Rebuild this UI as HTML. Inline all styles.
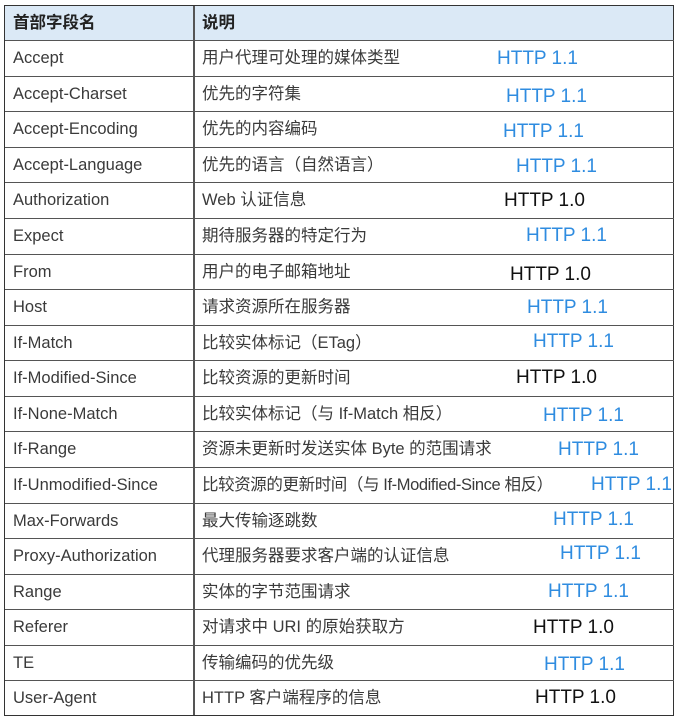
<!DOCTYPE html>
<html><head><meta charset="utf-8"><style>
body{margin:0;width:682px;height:722px;background:#fff;position:relative;overflow:hidden;font-family:"Liberation Sans","Noto Sans CJK SC",sans-serif;}
.t{position:absolute;left:4px;top:5px;width:668px;height:709px;border:1.5px solid #333;}
.hd{position:absolute;left:0;top:0;width:668px;height:35px;background:#dbe9f6;}
.v{position:absolute;left:188px;top:0;width:1.5px;height:709px;background:#555;}
.h{position:absolute;left:5px;width:669px;height:1px;background:#555;}
.r{position:absolute;left:0;width:682px;height:36px;}
.c{position:absolute;top:8px;font-size:16.5px;color:#3a3a3a;line-height:20px;white-space:nowrap;}
.n{left:13px}.d{left:202px}
.b{font-weight:bold;color:#222;top:9px;}
.p{position:absolute;font-size:19px;line-height:22px;white-space:nowrap;color:#2f8ce0;}
.k{color:#111}
</style></head><body>
<div class="t"><div class="hd"></div><div class="v"></div></div>
<div class="r" style="top:4px"><div class="c n b">首部字段名</div><div class="c d b">说明</div></div>

<div class="h" style="top:40px"></div>
<div class="r" style="top:40px"><div class="c n">Accept</div><div class="c d">用户代理可处理的媒体类型</div></div>
<div class="h" style="top:75.6px"></div>
<div class="r" style="top:75.6px"><div class="c n">Accept-Charset</div><div class="c d">优先的字符集</div></div>
<div class="h" style="top:111.2px"></div>
<div class="r" style="top:111.2px"><div class="c n">Accept-Encoding</div><div class="c d">优先的内容编码</div></div>
<div class="h" style="top:146.7px"></div>
<div class="r" style="top:146.7px"><div class="c n">Accept-Language</div><div class="c d">优先的语言（自然语言）</div></div>
<div class="h" style="top:182.3px"></div>
<div class="r" style="top:182.3px"><div class="c n">Authorization</div><div class="c d">Web 认证信息</div></div>
<div class="h" style="top:217.9px"></div>
<div class="r" style="top:217.9px"><div class="c n">Expect</div><div class="c d">期待服务器的特定行为</div></div>
<div class="h" style="top:253.5px"></div>
<div class="r" style="top:253.5px"><div class="c n">From</div><div class="c d">用户的电子邮箱地址</div></div>
<div class="h" style="top:289.1px"></div>
<div class="r" style="top:289.1px"><div class="c n">Host</div><div class="c d">请求资源所在服务器</div></div>
<div class="h" style="top:324.6px"></div>
<div class="r" style="top:324.6px"><div class="c n">If-Match</div><div class="c d">比较实体标记（ETag）</div></div>
<div class="h" style="top:360.2px"></div>
<div class="r" style="top:360.2px"><div class="c n">If-Modified-Since</div><div class="c d">比较资源的更新时间</div></div>
<div class="h" style="top:395.8px"></div>
<div class="r" style="top:395.8px"><div class="c n">If-None-Match</div><div class="c d">比较实体标记（与 If-Match 相反）</div></div>
<div class="h" style="top:431.4px"></div>
<div class="r" style="top:431.4px"><div class="c n">If-Range</div><div class="c d">资源未更新时发送实体 Byte 的范围请求</div></div>
<div class="h" style="top:467px"></div>
<div class="r" style="top:467px"><div class="c n">If-Unmodified-Since</div><div class="c d" style="letter-spacing:-0.4px">比较资源的更新时间（与 If-Modified-Since 相反）</div></div>
<div class="h" style="top:502.5px"></div>
<div class="r" style="top:502.5px"><div class="c n">Max-Forwards</div><div class="c d">最大传输逐跳数</div></div>
<div class="h" style="top:538.1px"></div>
<div class="r" style="top:538.1px"><div class="c n">Proxy-Authorization</div><div class="c d">代理服务器要求客户端的认证信息</div></div>
<div class="h" style="top:573.7px"></div>
<div class="r" style="top:573.7px"><div class="c n">Range</div><div class="c d">实体的字节范围请求</div></div>
<div class="h" style="top:609.3px"></div>
<div class="r" style="top:609.3px"><div class="c n">Referer</div><div class="c d">对请求中 URI 的原始获取方</div></div>
<div class="h" style="top:644.9px"></div>
<div class="r" style="top:644.9px"><div class="c n">TE</div><div class="c d">传输编码的优先级</div></div>
<div class="h" style="top:680.4px"></div>
<div class="r" style="top:680.4px"><div class="c n">User-Agent</div><div class="c d">HTTP 客户端程序的信息</div></div>

<div class="p" style="left:497px;top:48px">HTTP 1.1</div>
<div class="p" style="left:506px;top:86px">HTTP 1.1</div>
<div class="p" style="left:503px;top:121px">HTTP 1.1</div>
<div class="p" style="left:516px;top:156px">HTTP 1.1</div>
<div class="p k" style="left:504px;top:190px">HTTP 1.0</div>
<div class="p" style="left:526px;top:225px">HTTP 1.1</div>
<div class="p k" style="left:510px;top:264px">HTTP 1.0</div>
<div class="p" style="left:527px;top:297px">HTTP 1.1</div>
<div class="p" style="left:533px;top:331px">HTTP 1.1</div>
<div class="p k" style="left:516px;top:367px">HTTP 1.0</div>
<div class="p" style="left:543px;top:405px">HTTP 1.1</div>
<div class="p" style="left:558px;top:439px">HTTP 1.1</div>
<div class="p" style="left:591px;top:474px">HTTP 1.1</div>
<div class="p" style="left:553px;top:509px">HTTP 1.1</div>
<div class="p" style="left:560px;top:543px">HTTP 1.1</div>
<div class="p" style="left:548px;top:581px">HTTP 1.1</div>
<div class="p k" style="left:533px;top:617px">HTTP 1.0</div>
<div class="p" style="left:544px;top:654px">HTTP 1.1</div>
<div class="p k" style="left:535px;top:687px">HTTP 1.0</div>
</body></html>
